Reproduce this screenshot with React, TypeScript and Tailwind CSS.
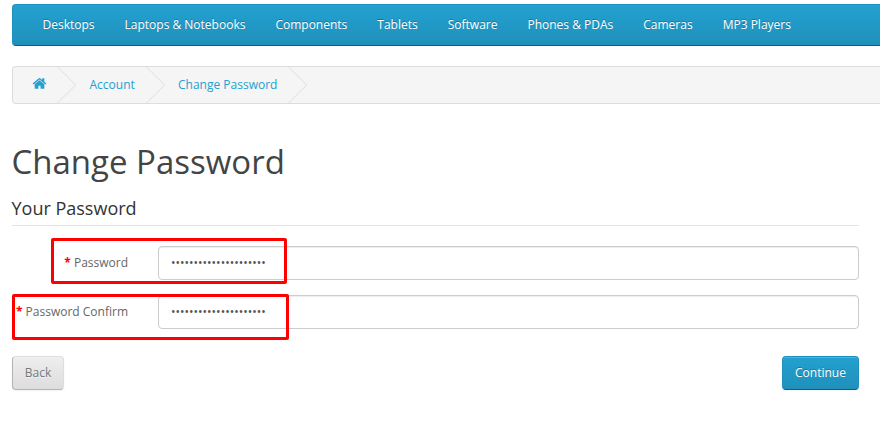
import React from "react";

const categories = [
  "Desktops",
  "Laptops & Notebooks",
  "Components",
  "Tablets",
  "Software",
  "Phones & PDAs",
  "Cameras",
  "MP3 Players",
];

function HomeIcon() {
  return (
    <svg viewBox="0 0 1792 1792" className="mb-[3px] block h-[15px] w-[15px] fill-[#23a1d1]">
      <path d="M1472 992v480q0 26-19 45t-45 19h-384v-384h-256v384h-384q-26 0-45-19t-19-45v-480q0-1 .5-3t.5-3l575-474 575 474q1 2 1 6zm223-69l-62 74q-8 9-21 11h-3q-13 0-21-7l-692-577-692 577q-12 8-24 7-13-2-21-11l-62-74q-8-10-7-23.5t11-21.5l719-599q32-26 76-26t76 26l244 204v-195q0-14 9-23t23-9h192q14 0 23 9t9 23v408l219 182q10 8 11 21.5t-7 23.5z" />
    </svg>
  );
}

function Crumb({ width, pad, children }: { width: string; pad: string; children: React.ReactNode }) {
  return (
    <li className={`flex h-9 shrink-0 items-center ${width}`}>
      <a className={`flex-1 whitespace-nowrap ${pad}`}>{children}</a>
      <svg viewBox="0 0 20 36" className="block h-9 w-5 shrink-0 fill-none stroke-[#dddddd]">
        <path d="M0 -0.5L18.7 18L0 36.5" />
      </svg>
    </li>
  );
}

function Field({ label, highlight }: { label: string; highlight: string }) {
  return (
    <div className="relative flex h-[34px]">
      <label className="w-[116px] shrink-0 whitespace-nowrap pt-2 text-right leading-[18px]">
        <span className="font-bold text-[#ff0000]">* </span>
        {label}
      </label>
      <div className="ml-[30px] flex flex-1 items-center rounded-[4px] border border-[#cccccc] bg-white px-3 text-[#555555] shadow-[inset_0_1px_1px_rgba(0,0,0,0.075)]">
        •••••••••••••••••••••
      </div>
      <div className={`pointer-events-none absolute h-[46px] rounded-[2px] border-[3px] border-[#ff0000] ${highlight}`} />
    </div>
  );
}

export default function App() {
  return (
    <div className="h-[434px] w-[880px] overflow-hidden bg-white pl-3 pt-1 font-['Open_Sans',sans-serif] text-[12px] leading-5 text-[#666666]">
      <nav className="flex h-[42px] rounded-l-[4px] border border-r-0 border-t-[#1f90bb] border-l-[#1f90bb] border-b-[#145e7a] bg-linear-to-b from-[#23a1d1] to-[#1f90bb] pl-[14.5px]">
        {categories.map((name) => (
          <a
            key={name}
            className="whitespace-nowrap px-[15px] py-[10px] text-white [text-shadow:0_-1px_0_rgba(0,0,0,0.25)]"
          >
            {name}
          </a>
        ))}
      </nav>

      <ul className="mt-5 flex h-[38px] rounded-l-[4px] border border-r-0 border-[#dddddd] bg-[#f5f5f5] text-[#23a1d1]">
        <Crumb width="w-[64px]" pad="pl-[19px]">
          <HomeIcon />
        </Crumb>
        <Crumb width="w-[89px]" pad="pl-[12.5px]">Account</Crumb>
        <Crumb width="w-[142px]" pad="pl-3">Change Password</Crumb>
      </ul>

      <main className="w-[847px]">
        <h1 className="-ml-[0.5px] mt-10 h-9 whitespace-nowrap text-[33px] leading-9 text-[#444444]">Change Password</h1>
        <h2 className="mt-[18px] h-[28px] border-b border-[#e5e5e5] text-[18px] leading-5 text-[#333333]">
          <span className="-ml-[0.5px]">Your Password</span>
        </h2>
        <form className="mt-5 flex flex-col gap-[15px]">
          <Field label="Password" highlight="-top-2 left-[39px] w-[236px]" />
          <Field label="Password Confirm" highlight="-top-px left-0 w-[277px]" />
        </form>
        <div className="mt-[27px] flex justify-between">
          <button className="h-[34px] w-[52px] rounded-[4px] border border-[#dddddd] border-b-[#b3b3b3] border-l-[#b3b3b3] bg-linear-to-b from-[#eeeeee] to-[#dddddd] text-[#777777] shadow-[inset_0_1px_0_rgba(255,255,255,0.2),0_1px_2px_rgba(0,0,0,0.05)] [text-shadow:0_1px_0_rgba(255,255,255,0.5)]">
            Back
          </button>
          <button className="h-[34px] w-[77px] rounded-[4px] border border-[#1f90bb] border-b-[#145e7a] bg-linear-to-b from-[#23a1d1] to-[#1f90bb] text-white shadow-[inset_0_1px_0_rgba(255,255,255,0.2),0_1px_2px_rgba(0,0,0,0.05)] [text-shadow:0_-1px_0_rgba(0,0,0,0.25)]">
            Continue
          </button>
        </div>
      </main>
    </div>
  );
}
